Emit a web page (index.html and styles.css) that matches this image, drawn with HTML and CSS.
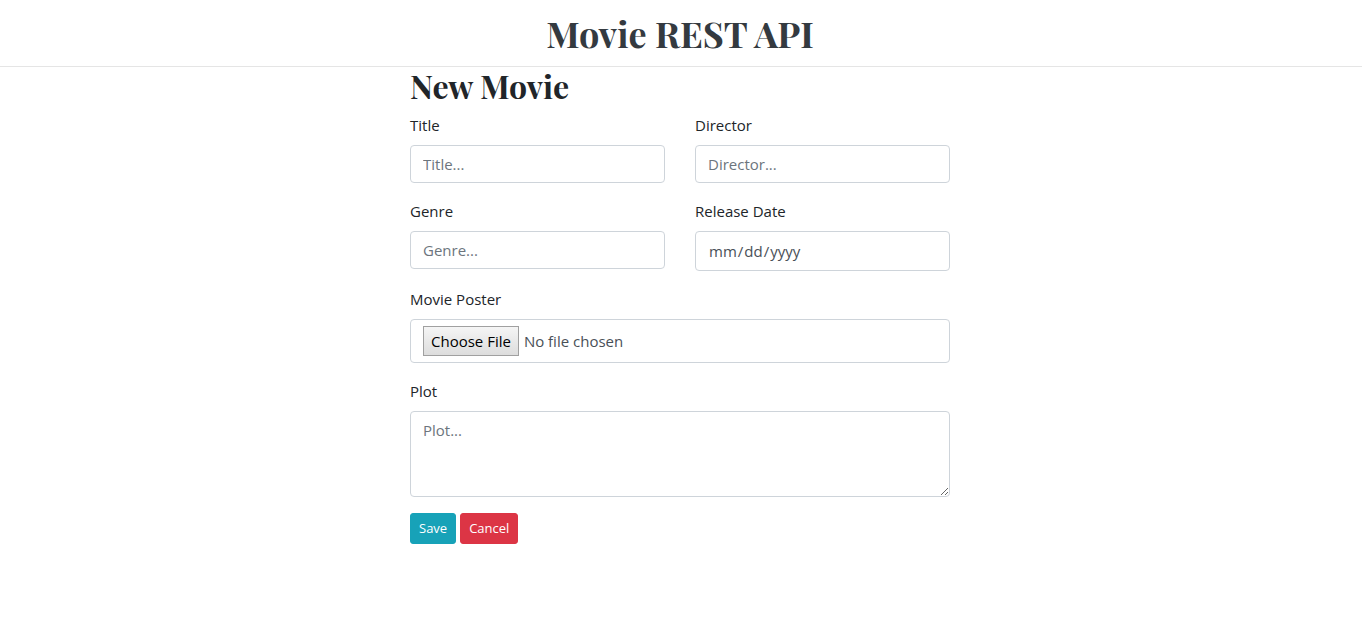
FILE: index.html
```html
<!DOCTYPE html>
<html lang="en">
<head>
<meta charset="utf-8">
<title>Movie REST API</title>
<link rel="stylesheet" href="styles.css">
</head>
<body>
<header class="site-header">
  <a class="brand" href="#">Movie REST API</a>
</header>
<main class="container">
  <h2 class="page-title">New Movie</h2>
  <form class="movie-form">
    <div class="form-row">
      <div class="form-group">
        <label for="title">Title</label>
        <input class="form-control" id="title" type="text" placeholder="Title...">
      </div>
      <div class="form-group">
        <label for="director">Director</label>
        <input class="form-control" id="director" type="text" placeholder="Director...">
      </div>
    </div>
    <div class="form-row">
      <div class="form-group">
        <label for="genre">Genre</label>
        <input class="form-control" id="genre" type="text" placeholder="Genre...">
      </div>
      <div class="form-group">
        <label for="release">Release Date</label>
        <input class="form-control date-control" id="release" type="date">
      </div>
    </div>
    <div class="form-group">
      <label for="poster">Movie Poster</label>
      <input class="form-control file-control" id="poster" type="file">
    </div>
    <div class="form-group">
      <label for="plot">Plot</label>
      <textarea class="form-control plot-control" id="plot" rows="3" placeholder="Plot..."></textarea>
    </div>
    <div class="actions">
      <button class="btn btn-info" type="submit">Save</button>
      <button class="btn btn-danger" type="button">Cancel</button>
    </div>
  </form>
</main>
</body>
</html>
```
FILE: styles.css
```css
*,
*::before,
*::after {
  box-sizing: border-box;
}

body {
  margin: 0;
  background: #fff;
  color: #212529;
  font-family: "Segoe UI", "Open Sans", "Noto Sans", sans-serif;
  font-size: 15px;
  line-height: 24px;
}

.site-header {
  display: flex;
  justify-content: center;
  padding: 4px 18px 4px 16px;
  border-bottom: 1px solid #e5e5e5;
}

.brand {
  color: #343a40;
  font-family: "Playfair Display", "Liberation Serif", serif;
  font-size: 36px;
  font-weight: 700;
  line-height: 58px;
  text-decoration: none;
}

.container {
  width: 100%;
  max-width: 542px;
  margin: 0 auto;
  padding-right: 2px;
}

.page-title {
  margin: 0 0 8px;
  font-family: "Playfair Display", "Liberation Serif", serif;
  font-size: 32px;
  font-weight: 700;
  line-height: 38px;
}

.form-row {
  display: grid;
  grid-template-columns: 1fr 1fr;
  align-items: start;
  column-gap: 30px;
}

.form-group {
  margin-bottom: 16px;
}

.form-group label {
  display: block;
  margin-bottom: 8px;
}

.form-control {
  display: block;
  width: 100%;
  height: 38px;
  padding: 6px 12px;
  border: 1px solid #ced4da;
  border-radius: 4px;
  background: #fff;
  color: #495057;
  font: inherit;
}

.form-control::placeholder {
  color: #6c757d;
  opacity: 1;
}

.date-control {
  height: 40px;
}

.date-control::-webkit-calendar-picker-indicator {
  display: none;
}

.file-control {
  height: 44px;
}

.file-control::file-selector-button {
  height: 30px;
  margin-right: 5px;
  padding: 0 7px;
  border: 1px solid #a0a0a0;
  border-radius: 0;
  background: linear-gradient(#f5f5f5, #dddddd);
  color: #000;
  font: inherit;
}

.plot-control {
  height: 86px;
  resize: vertical;
}

.actions {
  display: flex;
  gap: 4px;
}

.btn {
  padding: 4px 8px;
  border: 1px solid transparent;
  border-radius: 3px;
  color: #fff;
  font: inherit;
  font-size: 13px;
  line-height: 21px;
}

.btn-info {
  border-color: #17a2b8;
  background: #17a2b8;
}

.btn-danger {
  border-color: #dc3545;
  background: #dc3545;
}
```
